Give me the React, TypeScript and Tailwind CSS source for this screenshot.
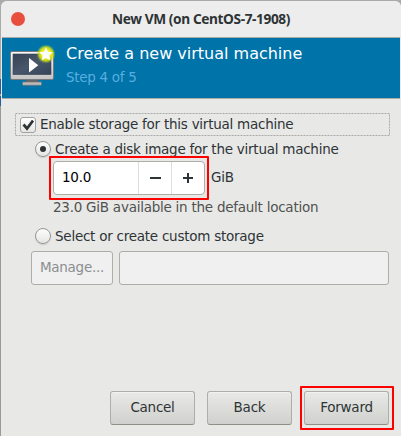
import React from "react";

function MonitorIcon() {
  return (
    <svg width="48" height="48" viewBox="0 0 48 48" className="block shrink-0">
      <defs>
        <radialGradient id="glow">
          <stop offset="0.45" stopColor="#eef21c" />
          <stop offset="0.7" stopColor="#d3e01a" stopOpacity="0.9" />
          <stop offset="1" stopColor="#a0d020" stopOpacity="0" />
        </radialGradient>
        <linearGradient id="bezel" x1="0" y1="0" x2="0" y2="1">
          <stop offset="0" stopColor="#fafafa" />
          <stop offset="1" stopColor="#c4c4c4" />
        </linearGradient>
        <linearGradient id="screen" x1="0" y1="0" x2="1" y2="1">
          <stop offset="0" stopColor="#364254" />
          <stop offset="0.5" stopColor="#48566b" />
          <stop offset="1" stopColor="#35435a" />
        </linearGradient>
      </defs>
      <path d="M18 34h12v4H18z" fill="#606468" />
      <rect x="14.5" y="37" width="19" height="3.2" rx="0.8" fill="#bdbdbd" stroke="#777" strokeWidth="0.8" />
      <rect x="2.5" y="6.5" width="43" height="28" rx="1.6" fill="url(#bezel)" stroke="#777b7e" />
      <rect x="5" y="9" width="38" height="20.6" fill="url(#screen)" stroke="#384456" strokeWidth="0.6" />
      <path d="M21 13v14.4l9.3-7.2z" fill="#fff" />
      <circle cx="38" cy="9" r="9.6" fill="url(#glow)" />
      <path d="M38 2.2l2 4.5 4.7.6-3.4 3.2.9 4.8-4.2-2.3-4.2 2.3.9-4.8-3.4-3.2 4.7-.6z" fill="#fff" />
    </svg>
  );
}

function Radio({ checked }: { checked?: boolean }) {
  return (
    <span className="flex h-4 w-4 shrink-0 items-center justify-center rounded-full border border-[#979895] bg-linear-to-b from-[#fdfdfd] to-[#e5e5e4] shadow-[0_1px_1px_#c9c9c7]">
      {checked && <span className="h-1.5 w-1.5 rounded-full bg-[#2e3436]" />}
    </span>
  );
}

function Button({ label }: { label: string }) {
  return (
    <button className="h-[34px] w-[85px] rounded-[3px] border border-[#adada9] border-b-[#8e8f87] bg-linear-to-b from-[#e9e9e7] to-[#d0d0cd] pb-0.5 text-center shadow-[inset_0_1px_0_#f2f2f1]">
      {label}
    </button>
  );
}

export default function App() {
  return (
    <div className="h-[436px] w-[401px] overflow-hidden bg-[linear-gradient(#aaa_79px,#2d5c9c_79px,#2d5c9c_94px,#aaa_94px,#aaa_96px,#2d5c9c_96px,#2d5c9c_106px,#999_106px)] font-['DejaVu_Sans',sans-serif] text-[13.5px] leading-4 tracking-[-0.25px] text-[#2e3436]">
      <div className="h-px bg-[#aaa]" />
      <div className="ml-px h-[435px] w-[400px] rounded-t-md bg-[#e8e8e7]">
        <header className="flex h-9 items-center rounded-t-md bg-[#ededed] pl-[10px]">
          <span className="h-3.5 w-3.5 rounded-full bg-[#e94f3f]" />
          <h1 className="ml-[87px] whitespace-nowrap font-['Noto_Sans',sans-serif] text-[13.7px] font-bold tracking-[-0.4px]">
            New VM (on CentOS-7-1908)
          </h1>
        </header>
        <section className="ml-px flex h-[62px] w-[398px] border-y border-[#aaaaa7] bg-[#0073a9] pt-[7px] pl-[6px]">
          <MonitorIcon />
          <div className="-mt-px ml-[10px] whitespace-nowrap">
            <h2 className="text-[16px] leading-[19px] tracking-normal text-white">Create a new virtual machine</h2>
            <p className="mt-[6px] leading-[17px] tracking-[-0.3px] text-[#59aee0]">Step 4 of 5</p>
          </div>
        </section>
        <main className="pt-[14px] pl-[14px] whitespace-nowrap">
          <label className="relative flex h-[23px] w-[375px] items-center pl-[5px]">
            <svg className="absolute inset-0" width="375" height="23">
              <rect x="0.5" y="0.5" width="374" height="22" fill="none" stroke="#a9a9a7" strokeDasharray="2 1" />
            </svg>
            <span className="flex h-4 w-4 items-center justify-center rounded-[3px] border border-[#a1a19e] bg-linear-to-b from-white to-[#e5e5e4]">
              <svg width="12" height="12" viewBox="0 0 12 12">
                <path d="M1.5 5.5l3.5 4 6-8" fill="none" stroke="#2e3436" strokeWidth="2.7" />
              </svg>
            </span>
            <span className="ml-1 pb-0.5">Enable storage for this virtual machine</span>
          </label>
          <div className="mt-[5px] ml-5 flex h-4 items-center">
            <Radio checked />
            <span className="ml-1 pb-px">Create a disk image for the virtual machine</span>
          </div>
          <div className="relative mt-[4px] ml-[38px] flex h-[34px] items-center">
            <div className="flex h-[34px] w-[152px] overflow-hidden rounded-[4px] border border-[#adada9] bg-white">
              <span className="w-[84px] pt-[7px] pl-2 text-black">10.0</span>
              <span className="flex w-[33px] items-center justify-center border-l border-[#dededd]">
                <span className="h-0.5 w-[11px] bg-[#2e3436]" />
              </span>
              <span className="flex w-[33px] items-center justify-center border-l border-[#dededd]">
                <svg width="10" height="10"><path d="M0 5h10M5 0v10" stroke="#2e3436" strokeWidth="2" /></svg>
              </span>
            </div>
            <span className="ml-[6px] pb-0.5">GiB</span>
            <div className="absolute -top-[5px] -left-[4px] h-[44px] w-[160px] rounded-[1px] border-2 border-[#ff0000]" />
          </div>
          <p className="mt-[4px] ml-[38px] text-[#50524f]">23.0 GiB available in the default location</p>
          <div className="mt-[13px] ml-5 flex h-4 items-center">
            <Radio />
            <span className="ml-1 pb-px">Select or create custom storage</span>
          </div>
          <div className="mt-[7px] ml-4 flex gap-[6px]">
            <button disabled className="h-[34px] w-[82px] rounded-[3px] border border-[#adada9] bg-[#f0f0f0] pb-0.5 text-[#8b8e8f]">Manage...</button>
            <input disabled className="h-[34px] w-[270px] rounded-[3px] border border-[#adada9] bg-[#f0f0f0]" />
          </div>
        </main>
        <footer className="relative mt-[106px] ml-[109px] flex gap-3">
          <Button label="Cancel" />
          <Button label="Back" />
          <Button label="Forward" />
          <div className="absolute -top-[5px] left-[190px] h-[44px] w-[94px] rounded-[1px] border-2 border-[#ff0000]" />
        </footer>
      </div>
    </div>
  );
}
